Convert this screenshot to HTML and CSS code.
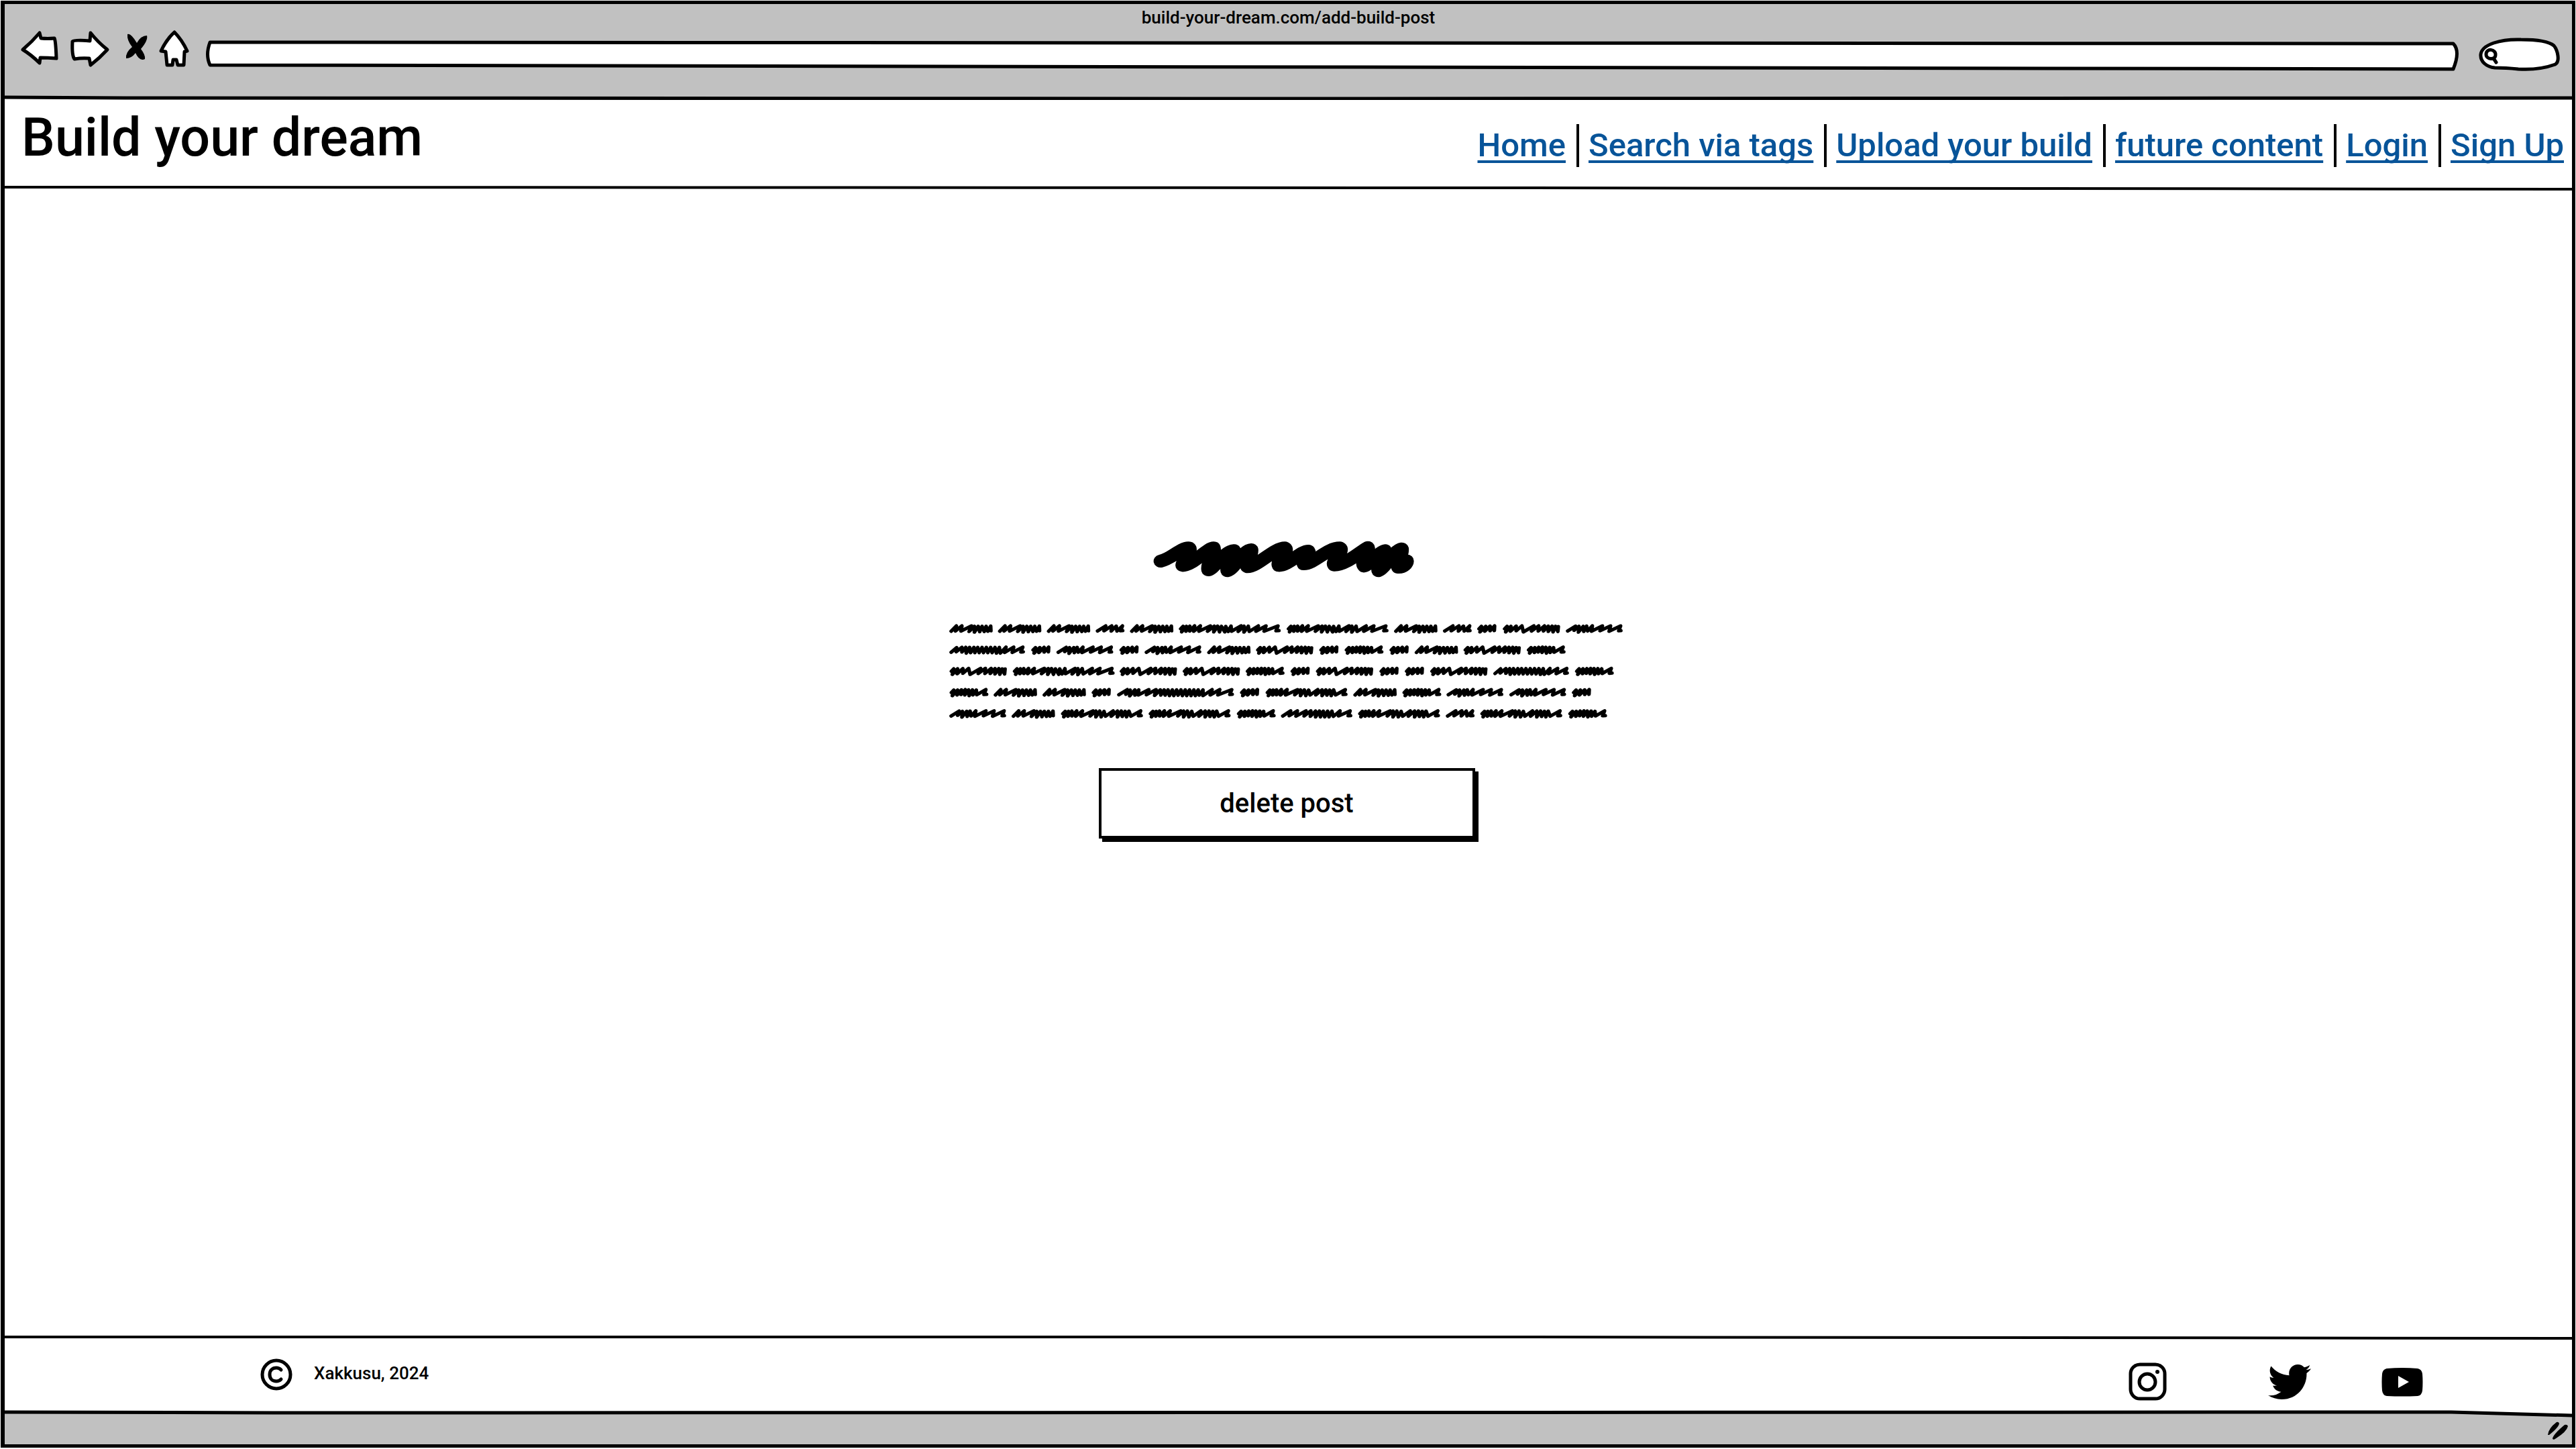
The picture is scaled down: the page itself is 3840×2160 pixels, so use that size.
FILE: index.html
```html
<!DOCTYPE html>
<html lang="en">
<head>
<meta charset="utf-8">
<title>Build your dream</title>
<link rel="stylesheet" href="styles.css">
</head>
<body>
<div class="window">
  <div class="toolbar">
    <div class="address">build-your-dream.com/add-build-post</div>
    <div class="controls">
      <button class="tool" type="button" aria-label="Back"><svg width="56" height="60" viewBox="31 47 56 60"><path class="ink white" d="M34 75Q48 63 59 50L61 58Q71 59 81 58Q83 61 84 88Q71 87 60 87L59 95Q47 83 34 75Z"/></svg></button>
      <button class="tool" type="button" aria-label="Forward"><svg width="60" height="60" viewBox="103 47 60 60"><path class="ink white" d="M108 63Q110 60 134 62L135 50Q146 64 160 75Q148 88 135 98L133 88Q122 87 111 89Q107 84 108 63Z"/></svg></button>
      <button class="tool" type="button" aria-label="Stop"><svg width="41" height="60" viewBox="179 47 41 60"><path d="M190 52Q195 50 204 65Q210 54 219 54Q221 61 210 74Q217 83 216 89Q208 93 202 80Q196 88 188 88Q187 79 197 71Q189 61 190 52Z"/></svg></button>
      <button class="tool" type="button" aria-label="Home"><svg width="55" height="60" viewBox="236 47 55 60"><path class="ink white" d="M260 49Q271 60 279 77L275 78L274 98H265L263 90H258L257 98H249L247 78L240 77Q248 60 260 49Z"/></svg></button>
      <div class="field field-url">
        <svg class="outline" viewBox="0 0 3359 60" preserveAspectRatio="none"><path class="ink white" d="M6 17L3350 19Q3361 30 3350 57L6 51Q-1 36 6 17Z"/></svg>
        <input class="entry" type="text" aria-label="Address">
      </div>
      <div class="field field-search">
        <svg class="outline" viewBox="3682 47 133 60"><path class="ink white" d="M3719 102C3707 101 3697 93 3698 82C3700 67 3728 59 3758 60C3785 60 3801 64 3807 69C3812 75 3817 92 3809 97Q3784 106 3754 104Q3735 102 3719 102Z"/><path class="ink" d="M3706 82C3706 72 3721 74 3720 83C3720 91 3706 90 3706 82ZM3717 88L3721 94"/></svg>
        <input class="entry" type="search" aria-label="Search">
      </div>
    </div>
  </div>
  <svg class="rule" viewBox="0 0 3826 8" preserveAspectRatio="none"><path class="grey" d="M0 0H3826V5H0Z"/><path class="ink" d="M0 4L180 5L1900 6L3826 5"/></svg>

  <header class="header">
    <h1 class="brand">Build your dream</h1>
    <nav class="nav">
      <a class="link" href="#">Home</a>
      <a class="link" href="#">Search via tags</a>
      <a class="link" href="#">Upload your build</a>
      <a class="link" href="#">future content</a>
      <a class="link" href="#">Login</a>
      <a class="link" href="#">Sign Up</a>
    </nav>
  </header>
  <svg class="rule" viewBox="0 0 3826 8" preserveAspectRatio="none"><path class="ink thin" d="M0 3L2200 4L3826 6"/></svg>

  <main class="main">
    <svg class="heading" viewBox="899 80 1114 160" preserveAspectRatio="none" role="img" aria-label="Post title"><path class="brush-wide" d="M927 169C970 160 1010 110 1043 110C1065 110 1020 160 1018 188C1060 190 1120 110 1149 110C1156 130 1120 180 1126 208C1150 205 1190 126 1234 122C1245 140 1200 190 1206 212C1235 205 1270 120 1306 118C1310 140 1280 190 1290 194C1330 195 1400 110 1446 110C1465 120 1410 170 1420 188C1460 190 1510 124 1544 124C1554 140 1520 170 1524 181C1570 180 1620 110 1675 110C1695 120 1640 170 1651 186C1700 188 1760 125 1792 108C1800 130 1760 170 1776 191C1800 185 1840 126 1864 122C1878 140 1830 190 1836 212C1860 205 1900 120 1934 114C1936 150 1910 180 1918 196C1940 198 1955 180 1955 168"/></svg>

    <svg class="copy" viewBox="45 447 2822 441" preserveAspectRatio="none" role="img" aria-label="Post text">
      <defs>
        <path id="wa" d="M7 33L29 9L25 32L52 9L48 32L92 9L82 34L104 11L104 37L120 11L126 35L136 11L145 34L153 11L160 33L172 10L173 31"/>
        <path id="wb" d="M7 32L41 9L34 31L66 9L64 32L85 10L88 32L111 9L103 31L112 30"/>
        <path id="wc" d="M8 22L18 11L12 36L32 11L30 33L46 10L46 32L66 9L62 33L90 9L84 33L132 9L120 33L148 10L146 36L162 10L170 36L178 11L192 36L196 11L206 34L218 10L220 33L260 9L248 34L272 10L272 37L290 10L294 34L332 9L322 33L364 9L356 33L414 9L406 31L418 30"/>
        <path id="wd" d="M8 22L18 11L12 36L36 11L32 33L54 10L54 31L73 9L72 30"/>
        <path id="we" d="M8 22L18 11L12 36L34 11L32 33L56 10L56 31L80 9L86 36L130 9L120 32L150 9L148 32L174 9L170 32L190 10L190 34L206 10L210 36L220 11L230 34L232 12"/>
        <path id="wf" d="M7 32L40 10L34 29L54 11L52 37L72 11L74 34L86 10L90 32L110 9L106 33L152 9L142 31L186 9L180 33L228 9L220 31L229 30"/>
        <path id="wg" d="M7 32L30 11L28 30L52 10L52 31L68 10L70 36L84 10L88 34L102 10L106 34L118 10L124 34L136 10L142 34L154 10L160 34L172 10L178 34L190 10L196 36L208 10L212 36L236 9L230 33L268 9L262 33L306 9L298 31L308 30"/>
        <path id="wh" d="M8 22L18 11L12 36L34 11L32 33L50 10L48 31L66 9L64 33L80 10L82 36L96 10L98 33L112 11L114 32L152 9L144 31L155 30"/>
        <path id="wj" d="M7 32L42 9L36 30L54 11L52 37L74 10L74 34L90 10L88 33L132 9L122 32L162 9L156 35L180 10L182 34L196 10L200 34L212 10L218 36L230 10L236 36L248 10L254 34L266 10L272 36L284 10L290 36L302 10L308 36L320 10L326 36L338 10L342 34L358 10L358 36L396 9L388 33L428 9L420 33L478 9L470 31L480 30"/>
        <path id="wk" d="M8 22L18 11L12 36L32 11L30 33L46 10L46 32L66 9L62 33L90 9L84 33L134 9L122 32L146 10L146 36L162 10L168 36L180 11L186 33L218 9L210 33L236 10L236 36L252 10L256 34L268 11L274 36L284 10L292 33L333 9L324 31L335 30"/>
        <path id="wl" d="M7 32L40 9L34 31L68 9L62 33L104 9L96 32L124 9L122 33L144 10L144 36L160 10L164 36L176 10L182 36L194 10L200 36L212 10L218 34L246 9L240 32L288 9L280 31L290 30"/>
      </defs>
      <g class="brush">
        <g transform="translate(0 450)"><use href="#wa" x="46"/><use href="#wa" x="249"/><use href="#wa" x="453"/><use href="#wb" x="657"/><use href="#wa" x="800"/><use href="#wc" x="1003"/><use href="#wc" x="1453"/><use href="#wa" x="1902"/><use href="#wb" x="2106"/><use href="#wd" x="2248"/><use href="#we" x="2355"/><use href="#wf" x="2619"/></g>
        <g transform="translate(0 545)"><use href="#wg" x="46"/><use href="#wd" x="387"/><use href="#wf" x="493"/><use href="#wd" x="755"/><use href="#wf" x="861"/><use href="#wa" x="1122"/><use href="#we" x="1325"/><use href="#wd" x="1589"/><use href="#wh" x="1695"/><use href="#wd" x="1882"/><use href="#wa" x="1988"/><use href="#we" x="2191"/><use href="#wh" x="2455"/></g>
        <g transform="translate(0 640)"><use href="#we" x="46"/><use href="#wc" x="310"/><use href="#we" x="756"/><use href="#we" x="1019"/><use href="#wh" x="1282"/><use href="#wd" x="1469"/><use href="#we" x="1575"/><use href="#wd" x="1840"/><use href="#wd" x="1946"/><use href="#we" x="2052"/><use href="#wg" x="2316"/><use href="#wh" x="2656"/></g>
        <g transform="translate(0 735)"><use href="#wh" x="46"/><use href="#wa" x="231"/><use href="#wa" x="435"/><use href="#wd" x="639"/><use href="#wj" x="746"/><use href="#wd" x="1258"/><use href="#wk" x="1365"/><use href="#wa" x="1732"/><use href="#wh" x="1936"/><use href="#wf" x="2121"/><use href="#wf" x="2383"/><use href="#wd" x="2643"/></g>
        <g transform="translate(0 830)"><use href="#wf" x="46"/><use href="#wa" x="306"/><use href="#wk" x="511"/><use href="#wk" x="877"/><use href="#wh" x="1245"/><use href="#wl" x="1430"/><use href="#wk" x="1751"/><use href="#wb" x="2118"/><use href="#wk" x="2261"/><use href="#wh" x="2628"/></g>
      </g>
    </svg>

    <button class="delete" type="button">delete post</button>
  </main>

  <svg class="rule" viewBox="0 0 3826 8" preserveAspectRatio="none"><path class="ink thin" d="M0 4L2200 4L3826 6"/></svg>
  <footer class="footer">
    <p class="copyright">
      <svg width="48" height="48" viewBox="0 0 48 48" aria-hidden="true"><circle class="ink" cx="24" cy="24" r="21"/><path class="ink" d="M31 17Q28 14 24 14C18 14 14 18 14 24C14 30 18 34 24 34Q28 34 31 31"/></svg>
      <span class="owner">Xakkusu, 2024</span>
    </p>
    <div class="social">
      <a class="profile profile-first" href="#" aria-label="Instagram"><svg width="64" height="64" viewBox="0 0 64 64"><rect class="ink" x="6" y="6" width="51" height="51" rx="14"/><circle class="ink" cx="31" cy="32" r="12"/><circle cx="46" cy="17" r="3"/></svg></a>
      <a class="profile" href="#" aria-label="Twitter"><svg width="64" height="64" viewBox="0 0 512 512"><path d="M459.37 151.716c.325 4.548.325 9.097.325 13.645 0 138.72-105.583 298.558-298.558 298.558-59.452 0-114.68-17.219-161.137-47.106 8.447.974 16.568 1.299 25.34 1.299 49.055 0 94.213-16.568 130.274-44.832-46.132-.975-84.792-31.188-98.112-72.772 6.498.974 12.995 1.624 19.818 1.624 9.421 0 18.843-1.3 27.614-3.573-48.081-9.747-84.143-51.98-84.143-102.985v-1.299c13.969 7.797 30.214 12.67 47.431 13.319-28.264-18.843-46.781-51.005-46.781-87.391 0-19.492 5.197-37.36 14.294-52.954 51.655 63.675 129.3 105.258 216.365 109.807-1.624-7.797-2.599-15.918-2.599-24.04 0-57.828 46.782-104.934 104.934-104.934 30.213 0 57.502 12.67 76.67 33.137 23.715-4.548 46.456-13.32 66.599-25.34-7.798 24.366-24.366 44.833-46.132 57.827 21.117-2.273 41.584-8.122 60.426-16.243-14.292 20.791-32.161 39.308-52.628 54.253z"/></svg></a>
      <a class="profile" href="#" aria-label="YouTube"><svg width="64" height="64" viewBox="0 0 64 64"><path fill-rule="evenodd" d="M9 12Q32 10 55 12Q61 13 62 20Q63 32 62 45Q61 52 55 53Q32 54 9 53Q3 52 2 45Q1 32 2 20Q3 13 9 12ZM26 23V41L42 32Z"/></svg></a>
    </div>
  </footer>
  <svg class="rule rule-status" viewBox="0 0 3826 12" preserveAspectRatio="none"><path class="grey" d="M0 4H3646L3826 8V12H0Z"/><path class="ink" d="M0 4L400 5L3646 4L3826 9"/></svg>
  <div class="status">
    <svg width="32" height="28" viewBox="0 0 32 28" aria-hidden="true"><path d="M1 20Q2 10 14 1Q17 0 18 3Q17 9 3 20ZM8 26Q8 20 26 5Q30 4 31 7Q29 16 10 27Z"/></svg>
  </div>
</div>
</body>
</html>
```
FILE: styles.css
```css
* {
  box-sizing: border-box;
}

body {
  margin: 1px 1px 2px;
  background: #fff;
  color: #000;
  font-family: Roboto, "Liberation Sans", sans-serif;
  font-size: 26px;
  font-weight: 500;
}

svg {
  display: block;
  overflow: visible;
}

.window {
  display: flex;
  flex-direction: column;
  min-height: calc(100vh - 3px);
  border: 5px solid #000;
  border-left-width: 6px;
}

/* Shared pen styles for the drawings */
.ink {
  fill: none;
  stroke: #000;
  stroke-width: 5;
  stroke-linejoin: round;
  stroke-linecap: round;
}

.thin {
  stroke-width: 4;
}

.white {
  fill: #fff;
}

.grey {
  fill: #c1c1c1;
}

.brush,
.brush-wide {
  fill: none;
  stroke: #000;
  stroke-width: 15;
  stroke-linejoin: round;
  stroke-linecap: round;
}

.brush-wide {
  stroke-width: 58;
}

.rule {
  flex: none;
  width: 100%;
  height: 8px;
  overflow: hidden;
}

.rule-status {
  height: 12px;
}

/* Browser toolbar */
.toolbar {
  height: 135px;
  background: #c1c1c1;
}

.address {
  line-height: 40px;
  text-align: center;
}

.controls {
  display: flex;
  gap: 16px;
  padding: 0 19px 0 24px;
}

.tool {
  padding: 0;
  border: 0;
  background: none;
}

.field {
  display: grid;
  height: 60px;
}

.field > * {
  grid-area: 1 / 1;
}

.field-url {
  flex: 1;
}

.field-search {
  width: 133px;
}

.outline {
  width: 100%;
  height: 60px;
}

.entry {
  width: 100%;
  min-width: 0;
  padding: 14px 16px 6px;
  border: 0;
  outline: 0;
  background: none;
  font: inherit;
  appearance: none;
}

.field-search .entry {
  padding-left: 44px;
}

/* Site header */
.header {
  display: flex;
  justify-content: space-between;
  align-items: flex-start;
  min-height: 127px;
  padding: 0 12px 0 25px;
}

.brand {
  margin: 0;
  font-size: 79px;
  font-weight: 500;
  line-height: 112px;
}

.nav {
  display: flex;
  padding-top: 36px;
}

.link {
  padding: 0 16px 0 14px;
  color: #085499;
  font-size: 49px;
  line-height: 64px;
  text-decoration-thickness: 4px;
  text-underline-offset: 6px;
  text-decoration-skip-ink: none;
}

.link + .link {
  border-left: 4px solid #000;
}

.link:last-child {
  padding-right: 0;
}

/* Post */
.main {
  display: flex;
  flex: 1;
  flex-direction: column;
  align-items: center;
  gap: 69px;
  padding: 523px 27px 70px 24px;
}

.heading {
  width: 398px;
  height: 53px;
}

.copy {
  width: 1008px;
  height: 147px;
}

.delete {
  width: 561px;
  height: 105px;
  margin-right: 2px;
  border: 4px solid #000;
  background: #fff;
  box-shadow: 5px 5px 0 #000;
  color: #000;
  font-family: inherit;
  font-size: 40px;
  font-weight: 500;
}

/* Footer */
.footer {
  display: flex;
  justify-content: space-between;
  align-items: center;
  min-height: 104px;
  padding: 0 221px 0 381px;
}

.copyright {
  display: flex;
  align-items: center;
  gap: 32px;
  margin: 0;
}

.owner {
  padding-bottom: 4px;
}

.social {
  display: flex;
  gap: 104px;
  padding-top: 22px;
}

.profile-first {
  margin-right: 43px;
}

.status {
  display: flex;
  justify-content: flex-end;
  align-items: center;
  height: 40px;
  padding-right: 5px;
  background: #c1c1c1;
}
```
